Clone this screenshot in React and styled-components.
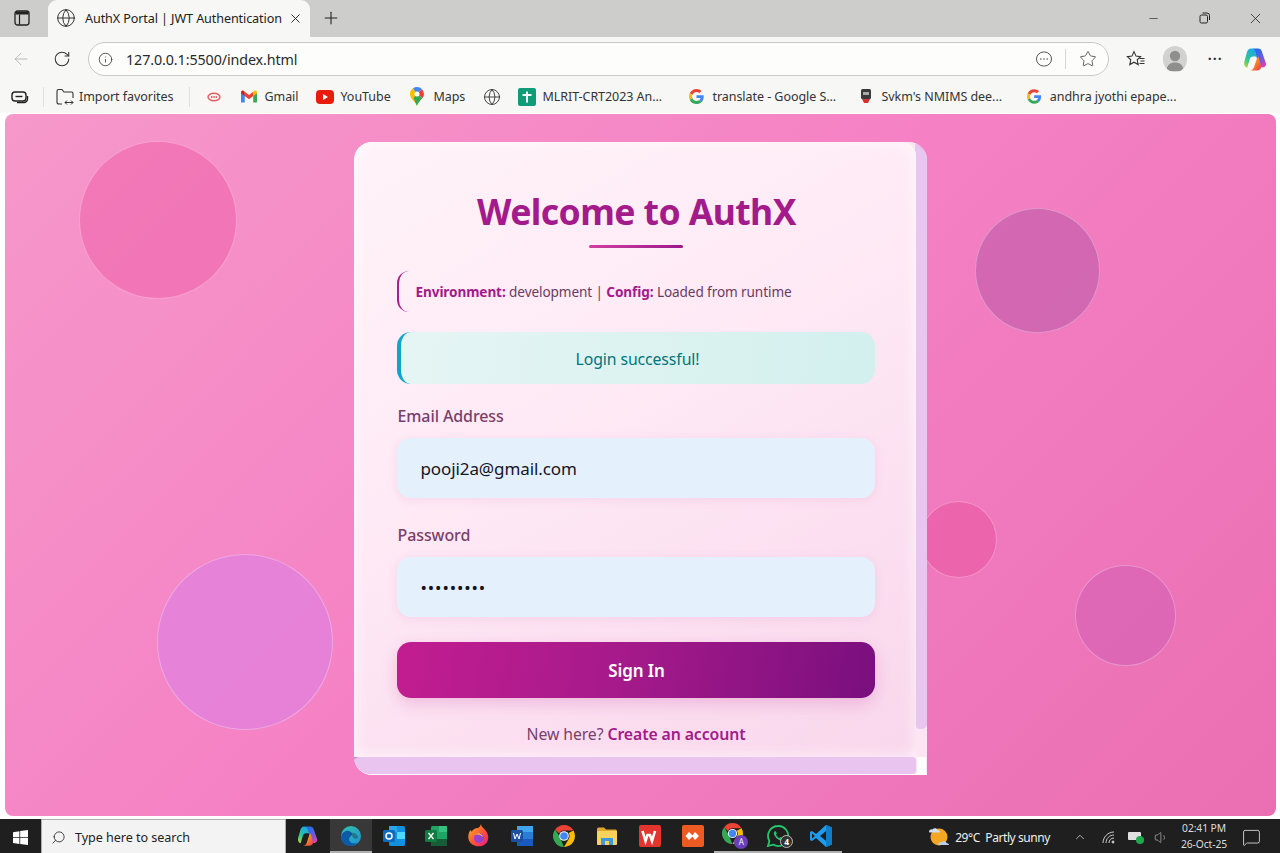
import React from 'react';
import styled, { createGlobalStyle } from 'styled-components';
import { Globe, X, Plus, RotateCw, ArrowLeft, Info, Star, Minus, Search, ChevronUp, MessageSquare, Volume1 } from 'lucide-react';

const Global = createGlobalStyle`
  html, body { margin: 0; padding: 0; height: 100%; overflow: hidden; background: #fff; }
  #root { height: 100%; }
  * { box-sizing: border-box; }
`;
const font = `"Noto Sans", "Open Sans", "Liberation Sans", sans-serif`;

const Shell = styled.div`
  width: 1280px; height: 853px; display: flex; flex-direction: column;
  font-family: ${font}; background: #fff; overflow: hidden;
`;
const TabStrip = styled.div`
  height: 37px; flex: none; background: #cdcdcc; display: flex; align-items: flex-end; color: #2b2b2b;
`;
const SideButton = styled.div`
  width: 48px; height: 37px; flex: none; display: flex; align-items: center; justify-content: center; padding-right: 4px; padding-bottom: 1px;
`;
const Tab = styled.div`
  width: 262px; height: 37px; background: #f7f7f6; border-radius: 9px 9px 0 0; display: flex; align-items: center; padding: 0 8px 1px 8px; gap: 9px; flex: none;
  svg { flex: none; }
`;
const TabTitle = styled.span`
  font-size: 12.6px; flex: none; width: 197px; margin-right: -3px; white-space: nowrap; letter-spacing: -0.1px; color: #222;
`;
const NewTab = styled.div`
  width: 42px; height: 37px; display: flex; align-items: center; justify-content: center; padding-bottom: 1px;
`;
const WindowControls = styled.div`
  margin-left: auto; margin-right: -1px; height: 37px; display: flex; align-items: center; padding-bottom: 1px;
`;
const WinButton = styled.div`
  width: 51px; display: flex; justify-content: center; align-items: center;
`;
const Toolbar = styled.div`
  height: 43px; flex: none; background: #f7f7f6; display: flex; align-items: center; padding: 1px 8px 0 10px; color: #333;
`;
const NavButton = styled.div`
  width: 40px; flex: none; display: flex; justify-content: center; margin-left: ${p => p.$ml || 0}px;
`;
const AddressBar = styled.div`
  width: 1021px; height: 34px; margin-left: 6px; flex: none; border: 1px solid #c9c9c9; border-radius: 17px; background: #fdfdfc; display: flex; align-items: center; padding: 0 11px 0 9px;
`;
const Url = styled.span`
  font-size: 14.3px; margin-left: 13px; flex: 1; color: #2a2a2a; letter-spacing: -0.1px;
`;
const VSep = styled.div`
  width: 1px; height: 20px; background: #d6d6d6; margin: 0 13px 0 12px;
`;
const RightTools = styled.div`
  display: flex; align-items: center; margin-left: 17px; flex: 1; justify-content: space-between; padding-right: 4px;
`;
const Avatar = styled.div`
  width: 24px; height: 26px; margin-left: -3px; border-radius: 13px; background: #d2d2d0; display: flex; align-items: center; justify-content: center; overflow: hidden;
`;
const Dots = styled.span`
  font-size: 14px; font-weight: 700; letter-spacing: 1px; line-height: 1; color: #333;
`;
const BookmarkBar = styled.div`
  height: 33px; flex: none; background: #f7f7f6; display: flex; align-items: center; padding-left: 11px; white-space: nowrap; color: #333; font-size: 12.5px; letter-spacing: -0.05px;
`;
const Bookmark = styled.div`
  display: flex; align-items: center; flex: none; gap: ${p => p.$gap ?? 6}px; margin-left: ${p => p.$ml || 0}px; width: ${p => p.$w ? p.$w + 'px' : 'auto'};
`;
const BarSep = styled.div`
  width: 1px; height: 20px; flex: none; background: #e1e1e1; margin-left: ${p => p.$ml}px;
`;
const PageWrap = styled.div`
  flex: none; height: 706px; padding: 1px 4px 3px 5px; background: #fff;
`;
const Viewport = styled.main`
  position: relative; height: 100%; border-radius: 8px; overflow: hidden;
  background: linear-gradient(135deg, #f698ca 0%, #f580c4 50%, #ea6eb2 100%);
  display: flex; justify-content: center; padding-top: 28px;
`;
const Bubble = styled.div`
  position: absolute; border-radius: 50%; border: 1px solid rgba(255,255,255,.3);
  left: ${p => p.$x - 5}px; top: ${p => p.$y - 114}px; width: ${p => p.$s}px; height: ${p => p.$s}px; background: ${p => p.$c};
`;
const Card = styled.section`
  position: relative; width: 573px; height: 633px; margin-left: -1px; border-radius: 18px 18px 0 18px; overflow: hidden;
  border-bottom: 1px solid #fff;
  background:
    linear-gradient(45deg, #dc7ccb 0 14px, transparent 16px),
    #fce6f3;
  flex: none;
`;
const ScrollV = styled.div`
  position: absolute; right: 0; top: 0; width: 12px; height: 587px; border-radius: 0 0 5px 5px;
  background: linear-gradient(225deg, #d98ad8 0 6px, #e7c6f0 9px);
`;
const Face = styled.div`
  position: relative; width: 562px; height: 615px; padding: 0 41px 0 43px; display: flex; flex-direction: column; border-radius: 18px 14px 0 0;
  background: linear-gradient(150deg, #fff3f9 0%, #fee9f5 45%, #f9d6ec 100%);
  box-shadow: inset 0 0 16px rgba(255,255,255,.75);
`;
const ScrollH = styled.div`
  position: absolute; left: 0; bottom: 0; width: 562px; height: 17px; background: #e8c4ee; border-radius: 8px 6px 6px 18px;
`;
const ScrollCorner = styled.div`
  position: absolute; right: 1px; bottom: 0; width: 9px; height: 17px; background: #fff;
`;
const Title = styled.h1`
  margin: 44px 0 0; padding-left: 2px; height: 50px; line-height: 50px; text-align: center; font-size: 35.6px; font-weight: 700; color: #a31a8a; letter-spacing: -0.6px; white-space: nowrap;
`;
const Underline = styled.div`
  width: 94px; height: 3px; flex: none; border-radius: 2px; margin: 9px auto 0; background: linear-gradient(90deg, #d0409f, #9a1a8c);
`;
const InfoBox = styled.div`
  margin-top: 23px; height: 41px; flex: none; border-left: 2.5px solid #a8208c; border-radius: 12px; display: flex; align-items: center; padding-left: 17px; font-size: 13.6px; color: #6b3a63; letter-spacing: -0.1px;
  b { color: #a31a8a; font-weight: 700; white-space: pre; }
  span { white-space: pre; }
`;
const Success = styled.div`
  margin-top: 20px; height: 52px; flex: none; padding-top: 1px; border-left: 4px solid #0ea5c9; border-radius: 14px; background: linear-gradient(100deg, #e5f5f4, #d3f0ee); color: #00757c; display: flex; align-items: center; justify-content: center; font-size: 15.8px; letter-spacing: -0.1px;
`;
const Label = styled.label`
  display: block; flex: none; margin-top: ${p => p.$mt}px; padding-left: 1px; height: 22px; line-height: 22px; font-size: 16px; font-weight: 500; color: #7a3f6c; letter-spacing: -0.1px;
`;
const Input = styled.input`
  display: block; flex: none; width: 100%; height: 60px; margin-top: 11px; border: none; outline: none; border-radius: 14px; background: #e5f0fd; padding: 0 24px; font-family: ${font}; font-size: 17px; color: #15151f; letter-spacing: -0.1px;
  box-shadow: 0 2px 10px rgba(214,120,180,.16);
  &[type=password] { font-size: 17px; letter-spacing: 0.9px; }
`;
const SignIn = styled.button`
  display: block; width: 100%; height: 56px; margin-top: 25px; border: none; border-radius: 14px; flex: none; padding: 0 0 0 2px; color: #fff; font-family: ${font}; font-weight: 600; font-size: 17px; letter-spacing: -0.1px;
  background: linear-gradient(100deg, #c21d90 0%, #a71a8b 45%, #7a0f7e 100%);
  box-shadow: 0 6px 16px rgba(190,60,150,.22);
`;
const Footer = styled.p`
  margin: 25px 0 0; padding-left: 1px; height: 22px; line-height: 22px; text-align: center; font-size: 15.8px; color: #7a3f6c; letter-spacing: -0.1px; white-space: nowrap;
  a { color: #a31a8a; font-weight: 600; }
`;
const Taskbar = styled.footer`
  flex: 1; background: #1f1f1f; display: flex; align-items: stretch; color: #f0f0f0;
`;
const StartButton = styled.div`
  width: 41px; flex: none; display: flex; align-items: center; justify-content: center; padding-top: 2px;
`;
const SearchBox = styled.div`
  width: 245px; flex: none; background: #f3f3f3; border: 1px solid #aeaeae; border-bottom: none; display: flex; align-items: center; gap: 9px; padding: 2px 0 0 9px; color: #222; font-size: 12.6px; letter-spacing: -0.05px;
`;
const Apps = styled.div`
  display: flex; margin-left: 1px;
`;
const AppSlot = styled.div`
  width: 42.7px; flex: none; position: relative; display: flex; align-items: center; justify-content: center; padding-top: 2px;
  background: ${p => p.$active ? '#383838' : 'transparent'};
  border-bottom: 2px solid ${p => p.$open ? '#b0b0b0' : 'transparent'};
`;
const Badge = styled.span`
  position: absolute; right: 6px; bottom: 3px; width: 13px; height: 13px; border-radius: 50%; background: #333; border: 1px solid #bbb; color: #fff; font-size: 8.5px; font-weight: 700; line-height: 11px; text-align: center;
`;
const Tray = styled.div`
  margin-left: auto; display: flex; align-items: center; padding: 2px 19px 0 0; font-size: 12px; color: #eee;
`;
const Weather = styled.span`
  font-size: 12px; white-space: pre; margin-left: 4px; letter-spacing: -0.42px;
`;
const TrayIcon = styled.div`
  display: flex; align-items: center; justify-content: center; margin-left: ${p => p.$ml}px;
`;
const Clock = styled.div`
  margin: -2px 0 0 10px; width: 50px; text-align: center; font-size: 10.3px; line-height: 16px; color: #ddd; letter-spacing: -0.1px; white-space: nowrap;
`;
const ProfileWrap = styled.div`
  position: relative; width: 26px; height: 26px;
`;
const ProfileDot = styled.span`
  position: absolute; right: 0; bottom: 0; width: 14px; height: 14px; border-radius: 50%; background: #6a3fb8; color: #fff; font-size: 8px; text-align: center; line-height: 14px;
`;

const WindowIcon = () => <svg width="16" height="16" viewBox="0 0 16 16" fill="none"><rect x="1" y="1" width="14" height="14" rx="2.5" stroke="#222" strokeWidth="1.3"/><path d="M1.5 4.500h13V3a1.500 1.500 0 0 0-1.500-1.500H3A1.500 1.500 0 0 0 1.500 3z" fill="#222"/><path d="M5.500 4.500v10" stroke="#222" strokeWidth="1.200"/></svg>;
const RestoreIcon = () => <svg width="12" height="12" viewBox="0 0 12 12" fill="none" stroke="#222" strokeWidth="1"><rect x="1" y="3" width="7.500" height="8" rx="1.500"/><path d="M3.500 1h4.500A2.500 2.500 0 0 1 10.500 3.500V8"/></svg>;
const MoreCircle = () => <svg width="18" height="18" viewBox="0 0 18 18" fill="none" stroke="#555"><rect x="1.500" y="2" width="15" height="14" rx="7" strokeWidth="1"/><circle cx="5.800" cy="9" r=".8" fill="#555" stroke="none"/><circle cx="9" cy="9" r=".8" fill="#555" stroke="none"/><circle cx="12.200" cy="9" r=".8" fill="#555" stroke="none"/></svg>;
const FavList = () => <svg width="20" height="18" viewBox="0 0 20 18" fill="none" stroke="#333" strokeWidth="1.100"><path d="M8 1.600l2 4.500 4.600.5-3.400 3.200 1 4.800L8 12.200l-4.200 2.400 1-4.800L1.400 6.600 6 6.100z"/><path d="M13.500 8.500h5M14.500 11h4M13.500 13.500h5"/></svg>;
const PersonIcon = () => <svg width="22" height="24" viewBox="0 0 22 24"><circle cx="11" cy="9" r="5.200" fill="#8f8f8d"/><path d="M2.500 24c0-6 3.800-8.500 8.500-8.500s8.500 2.500 8.500 8.500z" fill="#8f8f8d"/></svg>;
const Copilot = ({ s = 25, id = 'a' }) => (
  <svg width={s} height={s} viewBox="0 0 24 24">
    <defs>
      <linearGradient id={`cpb${id}`} x1=".3" y1="0" x2=".8" y2="1"><stop offset="0" stopColor="#1f6fe8"/><stop offset=".55" stopColor="#6a5ae0"/><stop offset="1" stopColor="#e83fa0"/></linearGradient>
      <linearGradient id={`cpg${id}`} x1=".7" y1="0" x2=".2" y2="1"><stop offset="0" stopColor="#18a8e8"/><stop offset=".6" stopColor="#2fc49a"/><stop offset="1" stopColor="#a8d83c"/></linearGradient>
      <linearGradient id={`cpo${id}`} x1="0" y1="0" x2="1" y2="1"><stop offset="0" stopColor="#f9c11c"/><stop offset=".6" stopColor="#f7762a"/><stop offset="1" stopColor="#e8305e"/></linearGradient>
    </defs>
    <path d="M9 1.500h5.500c1.800 0 3 1 3.500 2.500l4 11.500c.6 2-1 4-3 4h-3.500L12 6C11.500 4 10.500 2.500 9 1.500z" fill={`url(#cpb${id})`}/>
    <path d="M8 1.500c2 0 3.300 1 3.800 3l1.400 4.500H9.500C8 9 7 10 6.500 11.500L4 20C1.800 19.500.6 17 1.200 14.500l2.300-8.500C4.100 3.500 5.500 1.500 8 1.500z" fill={`url(#cpg${id})`}/>
    <path d="M6.500 22.500h7c2 0 3.500-1 4-3L15 9.500c-.8.300-1.500 1-1.800 2l-2.700 8c-.6 2-2 3-4 3z" fill={`url(#cpo${id})`}/>
  </svg>
);
const Folder = () => <svg width="20" height="20" viewBox="0 0 20 20" fill="none" stroke="#333" strokeWidth="1.100"><path d="M2 15V4a1.500 1.500 0 0 1 1.500-1.500H7L9 5h7.500A1.500 1.500 0 0 1 18 6.500V11"/><path d="M2 15c0 1 .8 2 2 2h3"/><path d="M10 15.500h8M12 13.500l-2 2 2 2M16 13.500l2 2-2 2" strokeWidth="1"/></svg>;
const Reading = () => <svg width="18" height="14" viewBox="0 0 18 14" fill="none" stroke="#222" strokeWidth="1.400"><rect x="1" y="2" width="14" height="9" rx="3"/><path d="M4.500 6.500h7"/><path d="M16.500 6v3a3.500 3.500 0 0 1-3.500 3.500H6"/></svg>;
const Gmail = () => <svg width="17" height="13" viewBox="0 0 17 13"><path d="M0 2v10a1 1 0 0 0 1 1h3V5z" fill="#4285f4"/><path d="M17 2v10a1 1 0 0 1-1 1h-3V5z" fill="#34a853"/><path d="M13 1.500 8.500 5 4 1.500V6l4.500 3.400L13 6z" fill="#ea4335"/><path d="M0 2c0-1.500 1.700-2.400 3-1.400L4 1.500V6L0 3z" fill="#c5221f"/><path d="M17 2c0-1.500-1.700-2.400-3-1.400l-1 .9V6l4-3z" fill="#fbbc04"/></svg>;
const YouTube = () => <svg width="18" height="14" viewBox="0 0 18 14"><rect width="18" height="14" rx="4" fill="#e81c0c"/><path d="M7 4l5 3-5 3z" fill="#fff"/></svg>;
const MapsPin = () => <svg width="14" height="19" viewBox="0 0 14 19"><path d="M7 19C6 15 0 12 0 7a7 7 0 0 1 3-5.700L7 7z" fill="#fbbc04"/><path d="M3 1.300A7 7 0 0 1 7 0c2 0 3.700.8 5 2.200L7 7z" fill="#4285f4"/><path d="M12 2.200A7 7 0 0 1 14 7c0 1.500-.7 3-1.500 4L7 7z" fill="#ea4335"/><path d="M12.500 11C10.500 13.500 7.800 15.500 7 19L3.500 11 7 7z" fill="#34a853"/><circle cx="7" cy="7" r="2.500" fill="#fff"/></svg>;
const GoogleG = () => <svg width="15" height="15" viewBox="0 0 48 48"><path fill="#ea4335" d="M24 9.500c3.500 0 6.700 1.300 9.200 3.400l6.800-6.800C35.900 2.400 30.500 0 24 0 14.600 0 6.500 5.400 2.600 13.200l7.900 6.100C12.400 13.700 17.700 9.500 24 9.500z"/><path fill="#4285f4" d="M47 24.500c0-1.600-.1-3.100-.4-4.500H24v9h13c-.6 3-2.200 5.500-4.800 7.200l7.700 6C44.400 37.900 47 31.800 47 24.500z"/><path fill="#fbbc04" d="M10.500 28.700c-.5-1.400-.8-3-.8-4.700s.3-3.200.8-4.700l-7.900-6.100C1 16.500 0 20.100 0 24s1 7.500 2.600 10.800z"/><path fill="#34a853" d="M24 48c6.500 0 11.900-2.100 15.900-5.800l-7.700-6c-2.200 1.400-4.900 2.300-8.200 2.300-6.300 0-11.600-4.200-13.500-9.800l-7.900 6.100C6.500 42.600 14.600 48 24 48z"/></svg>;
const PlusBook = () => <svg width="18" height="18" viewBox="0 0 18 18"><rect width="18" height="18" rx="2" fill="#0f9d77"/><path d="M9 3.500v11M4.500 7h9" stroke="#fff" strokeWidth="2"/></svg>;
const RedSeal = () => <svg width="18" height="18" viewBox="0 0 18 18"><rect width="18" height="18" rx="3" fill="#fdf6f6"/><ellipse cx="9" cy="9" rx="6" ry="3.800" fill="none" stroke="#e06060" strokeWidth="1.400"/><path d="M6 9h6" stroke="#d84040" strokeWidth="1.500" strokeDasharray="1.500 .8"/></svg>;
const Shield = () => <svg width="12" height="15" viewBox="0 0 12 15"><rect x="1" y="0" width="10" height="10" rx="1.500" fill="#3a3a3a"/><path d="M3 3h6v3H3z" fill="#aaa"/><path d="M2 10h8l-2 4H4z" fill="#d93030"/></svg>;
const Windows = () => <svg width="15" height="15" viewBox="0 0 15 15" fill="#fff"><path d="M0 2.200 6.400 1.200v6H0zM7.200 1.100 15 0v7.200H7.200zM0 8h6.400v6L0 13zM7.200 8H15v7l-7.800-1.100z"/></svg>;
const Edge = () => <svg width="22" height="22" viewBox="0 0 22 22"><defs><linearGradient id="eg1" x1="0" y1="0" x2="1" y2="1"><stop offset="0" stopColor="#33c6a8"/><stop offset="1" stopColor="#1c8fd9"/></linearGradient></defs><circle cx="11" cy="11" r="10" fill="url(#eg1)"/><path d="M1 12c1-5 5-7 8-6 3 1 3.500 4 2 5-2 1.500-3 4 0 6.500 2 1.500 5 1.200 7-.5-2 2.800-5 4-8 4-5 0-9-4-9-9z" fill="#0d5aa7"/><path d="M10 8c3-1 7 0 8 4 .3 1.500-1.500 2-4 1.500z" fill="#1f1f1f" opacity=".35"/></svg>;
const Outlook = () => <svg width="22" height="20" viewBox="0 0 22 20"><rect x="6" y="0" width="16" height="20" rx="1.500" fill="#1490df"/><rect x="6" y="0" width="8" height="6" fill="#28a8ea"/><rect x="14" y="6" width="8" height="7" fill="#50d9ff"/><rect x="0" y="4" width="12" height="12" rx="1.500" fill="#0f6cbd"/><circle cx="6" cy="10" r="3" fill="none" stroke="#fff" strokeWidth="1.500"/></svg>;
const Excel = () => <svg width="22" height="20" viewBox="0 0 22 20"><rect x="6" y="0" width="16" height="20" rx="1.500" fill="#21a366"/><rect x="14" y="0" width="8" height="6" fill="#33c481"/><rect x="6" y="13" width="16" height="7" fill="#185c37"/><rect x="0" y="4" width="12" height="12" rx="1.500" fill="#107c41"/><path d="M3.500 7l5 6M8.500 7l-5 6" stroke="#fff" strokeWidth="1.300"/></svg>;
const Word = () => <svg width="22" height="20" viewBox="0 0 22 20"><rect x="6" y="0" width="16" height="20" rx="1.500" fill="#2b7cd3"/><rect x="6" y="0" width="16" height="6" fill="#41a5ee"/><rect x="6" y="13" width="16" height="7" fill="#185abd"/><rect x="0" y="4" width="12" height="12" rx="1.500" fill="#1c4f9f"/><path d="M2.500 7l1.500 6 2-5 2 5 1.500-6" stroke="#fff" strokeWidth="1" fill="none"/></svg>;
const Firefox = () => <svg width="22" height="24" viewBox="0 0 22 24"><defs><linearGradient id="ff" x1="0" y1="0" x2="1" y2="1"><stop offset="0" stopColor="#ffbd30"/><stop offset=".5" stopColor="#ff5a30"/><stop offset="1" stopColor="#e31587"/></linearGradient></defs><path d="M13 0c0 3 3 4 5 7 3 4 3 9 0 12.500-4 4-11 3.500-15 0C-.5 16-.5 10 2.500 6l1.500 2c.5-3 4-4 6-4 1.500-1 2.500-2 3-4z" fill="url(#ff)"/><circle cx="11" cy="14" r="5" fill="#9b3fd0"/><path d="M6 11c3-1 6-1 9 2-1-3-3-4-5-4z" fill="#ffb14a"/></svg>;
const Chrome = ({ s = 22 }) => <svg width={s} height={s} viewBox="0 0 22 22"><path d="M11 0a11 11 0 0 1 9.500 5.500H11a5.500 5.500 0 0 0-5 3L2.200 4.500A11 11 0 0 1 11 0z" fill="#ea4335"/><path d="M2.200 4.500 6.500 11.500 11 22A11 11 0 0 1 2.200 4.500z" fill="#34a853"/><path d="M20.500 5.500A11 11 0 0 1 11 22l4.700-8A5.500 5.500 0 0 0 15.500 8z" fill="#fbbc04"/><circle cx="11" cy="11" r="4.800" fill="#fff"/><circle cx="11" cy="11" r="3.800" fill="#4285f4"/></svg>;
const Explorer = () => <svg width="22" height="20" viewBox="0 0 22 20"><path d="M1 3a1.500 1.500 0 0 1 1.500-1.500H8l2 2h9.500A1.500 1.500 0 0 1 21 5v2H1z" fill="#e0a92c"/><rect x="1" y="5" width="20" height="14" rx="1" fill="#fbd35c"/><rect x="5" y="12" width="12" height="7" fill="#3f9bd8"/><rect x="9" y="15" width="4" height="4" fill="#fbd35c"/></svg>;
const Wps = () => <svg width="22" height="22" viewBox="0 0 22 22"><rect width="22" height="22" rx="2" fill="#e3342f"/><path d="M3.500 6l3 10 2-6 2.500 0 2 6 3-10" stroke="#fff" strokeWidth="2.600" fill="none"/></svg>;
const Anydesk = () => <svg width="22" height="22" viewBox="0 0 22 22"><rect width="22" height="22" rx="2" fill="#ee5a24"/><path d="M7 7l4 4-4 4-3.500-4zM13 7l4 4-4 4-3-4z" fill="#fff"/></svg>;
const ChromeProfile = () => <ProfileWrap><Chrome s={21} /><ProfileDot>A</ProfileDot></ProfileWrap>;
const WhatsApp = () => <svg width="24" height="24" viewBox="0 0 24 24" fill="none"><path d="M12 2a10 10 0 0 0-8.600 15L2 22l5.200-1.400A10 10 0 1 0 12 2z" stroke="#25c66a" strokeWidth="1.800"/><path d="M8.500 7.500c-1 1-1 3 1 5.500s4.500 4 6 3.500 1.500-2 1-2.500l-2-1-1 1c-1 0-3-2-3.500-3.500l.8-1L10 7.500c-.5-.5-1-.5-1.500 0z" fill="#25c66a"/></svg>;
const VSCode = () => <svg width="22" height="22" viewBox="0 0 22 22"><path d="M16 0l6 2.500v17L16 22 6 13l-4 3-2-1V7l2-1 4 3z" fill="#1f9cf0"/><path d="M16 6l-6 5 6 5z" fill="#1f1f1f"/><path d="M16 0l6 2.500v17L16 22z" fill="#0f7ec9"/><path d="M2 8.500 5 11l-3 2.500z" fill="#1f1f1f"/></svg>;
const WeatherIcon = () => <svg width="24" height="24" viewBox="0 0 24 24"><circle cx="12" cy="12" r="8.500" fill="#f5a623"/><path d="M2 7c0-2 2-3 3.500-2.500C7 2.500 10 3 10.500 5c1.500 0 2.500 1 2.500 2.500H3C2.300 7.500 2 7.200 2 7z" fill="#cfe0f2"/><path d="M11 20c0-2 2-3 3.500-2.500 1.500-2 4.500-1.500 5 .5 1.500 0 2.500 1 2.500 2H12c-.7 0-1-.2-1-.5z" fill="#b9cfe8"/></svg>;
const NetIcon = () => <svg width="16" height="14" viewBox="0 0 16 14" fill="none" stroke="#cfcfcf" strokeWidth="1"><path d="M2 13C2 7 7 2 13 2M5 13c0-4.500 3.500-8 8-8M8 13c0-3 2-5 5-5"/><circle cx="12" cy="12" r="1" fill="#cfcfcf"/></svg>;
const BatteryIcon = () => <svg width="17" height="14" viewBox="0 0 17 14"><rect x="0" y="2" width="13" height="8" rx="1" fill="#e0e0e0"/><circle cx="12" cy="10" r="4" fill="#1faa4e"/></svg>;

const bookmarks = [
  { key: 'gmail', icon: <Gmail />, label: 'Gmail', w: 57, ml: 18, gap: 7 },
  { key: 'yt', icon: <YouTube />, label: 'YouTube', w: 75, ml: 18 },
  { key: 'maps', icon: <MapsPin />, label: 'Maps', w: 55, ml: 19, gap: 9 },
  { key: 'globe', icon: <Globe size={18} strokeWidth={1.2} />, label: '', w: 18, ml: 18 },
  { key: 'mlrit', icon: <PlusBook />, label: 'MLRIT-CRT2023 An...', w: 146, ml: 17 },
  { key: 'tr', icon: <GoogleG />, label: 'translate - Google S...', w: 148, ml: 25, gap: 8 },
  { key: 'svkm', icon: <Shield />, label: "Svkm's NMIMS dee...", w: 143, ml: 23, gap: 9 },
  { key: 'aj', icon: <GoogleG />, label: 'andhra jyothi epape...', w: 149, ml: 24, gap: 8 },
];
const apps = [
  { key: 'copilot', el: <Copilot s={22} id="t" /> },
  { key: 'edge', el: <Edge />, active: true, open: true },
  { key: 'outlook', el: <Outlook /> },
  { key: 'excel', el: <Excel /> },
  { key: 'firefox', el: <Firefox /> },
  { key: 'word', el: <Word /> },
  { key: 'chrome', el: <Chrome /> },
  { key: 'explorer', el: <Explorer /> },
  { key: 'wps', el: <Wps /> },
  { key: 'any', el: <Anydesk /> },
  { key: 'cp', el: <ChromeProfile />, open: true },
  { key: 'wa', el: <WhatsApp />, open: true, badge: '4' },
  { key: 'vs', el: <VSCode />, open: true },
];
const bubbles = [
  { x: 79, y: 141, s: 158, c: 'rgba(238,96,170,.55)' },
  { x: 975, y: 208, s: 125, c: 'rgba(190,90,170,.62)' },
  { x: 157, y: 554, s: 176, c: 'rgba(224,128,222,.7)' },
  { x: 920, y: 501, s: 77, c: 'rgba(232,86,160,.58)' },
  { x: 1075, y: 565, s: 101, c: 'rgba(205,90,180,.5)' },
];

export default function App() {
  return (
    <Shell>
      <Global />
      <TabStrip>
        <SideButton><WindowIcon /></SideButton>
        <Tab>
          <Globe size={20} strokeWidth={1.2} color="#333" />
          <TabTitle>AuthX Portal | JWT Authentication</TabTitle>
          <X size={15} strokeWidth={1.5} color="#222" />
        </Tab>
        <NewTab><Plus size={20} strokeWidth={1.3} color="#222" /></NewTab>
        <WindowControls>
          <WinButton><Minus size={13} strokeWidth={1.2} color="#222" /></WinButton>
          <WinButton><RestoreIcon /></WinButton>
          <WinButton><X size={17} strokeWidth={1.1} color="#222" /></WinButton>
        </WindowControls>
      </TabStrip>
      <Toolbar>
        <NavButton $ml={-9}><ArrowLeft size={20} strokeWidth={1.1} color="#b5b5b5" /></NavButton>
        <NavButton $ml={1}><RotateCw size={18} strokeWidth={1.4} color="#333" /></NavButton>
        <AddressBar>
          <Info size={15} strokeWidth={1.3} color="#333" />
          <Url>127.0.0.1:5500/index.html</Url>
          <MoreCircle />
          <VSep />
          <Star size={18} strokeWidth={1.1} color="#444" />
        </AddressBar>
        <RightTools>
          <FavList />
          <Avatar><PersonIcon /></Avatar>
          <Dots>···</Dots>
          <Copilot />
        </RightTools>
      </Toolbar>
      <BookmarkBar>
        <Reading />
        <BarSep $ml={14} />
        <Bookmark $ml={11} $gap={4}><Folder /><span>Import favorites</span></Bookmark>
        <BarSep $ml={16} />
        <Bookmark $ml={15}><RedSeal /></Bookmark>
        {bookmarks.map(b => (
          <Bookmark key={b.key} $ml={b.ml} $w={b.w} $gap={b.gap}>{b.icon}{b.label && <span>{b.label}</span>}</Bookmark>
        ))}
      </BookmarkBar>
      <PageWrap>
        <Viewport>
          {bubbles.map(b => <Bubble key={b.x} $x={b.x} $y={b.y} $s={b.s} $c={b.c} />)}
          <Card>
            <ScrollV />
            <Face>
              <Title>Welcome to AuthX</Title>
              <Underline />
              <InfoBox>
                <b>Environment: </b><span>development | </span><b>Config: </b><span>Loaded from runtime</span>
              </InfoBox>
              <Success>Login successful!</Success>
              <Label $mt={21}>Email Address</Label>
              <Input type="email" defaultValue="pooji2a@gmail.com" />
              <Label $mt={26}>Password</Label>
              <Input type="password" defaultValue="pooji2a12" />
              <SignIn>Sign In</SignIn>
              <Footer>New here? <a>Create an account</a></Footer>
            </Face>
            <ScrollH />
            <ScrollCorner />
          </Card>
        </Viewport>
      </PageWrap>
      <Taskbar>
        <StartButton><Windows /></StartButton>
        <SearchBox><Search size={15} strokeWidth={1.3} style={{ transform: 'scaleX(-1)' }} /><span>Type here to search</span></SearchBox>
        <Apps>
          {apps.map(a => (
            <AppSlot key={a.key} $active={a.active} $open={a.open}>
              {a.el}
              {a.badge && <Badge>{a.badge}</Badge>}
            </AppSlot>
          ))}
        </Apps>
        <Tray>
          <WeatherIcon />
          <Weather>29°C  Partly sunny</Weather>
          <TrayIcon $ml={23}><ChevronUp size={14} strokeWidth={1.2} /></TrayIcon>
          <TrayIcon $ml={14}><NetIcon /></TrayIcon>
          <TrayIcon $ml={11}><BatteryIcon /></TrayIcon>
          <TrayIcon $ml={9}><Volume1 size={15} strokeWidth={1} color="#ccc" /></TrayIcon>
          <Clock>02:41 PM<br />26-Oct-25</Clock>
          <TrayIcon $ml={13}><MessageSquare size={19} strokeWidth={1} /></TrayIcon>
        </Tray>
      </Taskbar>
    </Shell>
  );
}
